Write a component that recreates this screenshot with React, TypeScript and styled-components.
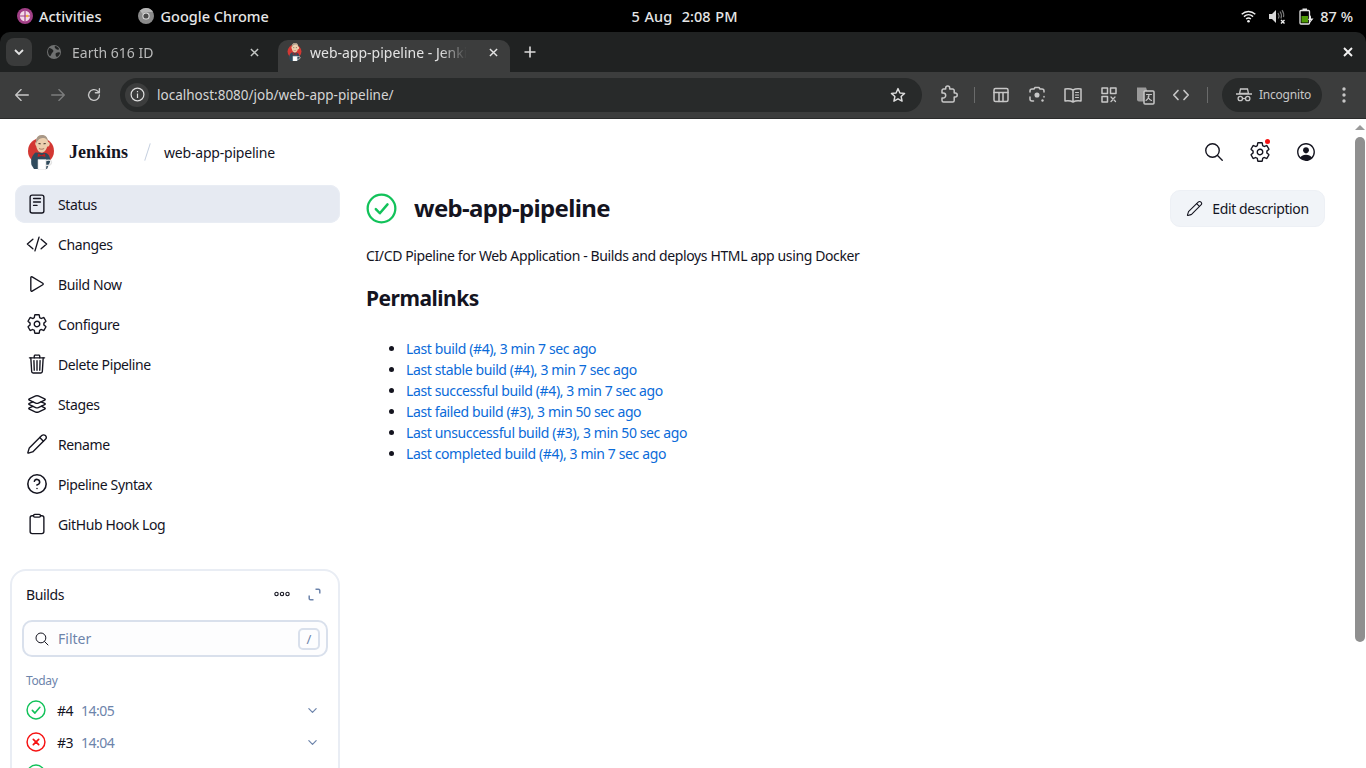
import React from "react";
import styled, { createGlobalStyle } from "styled-components";
import { Pencil, CircleHelp } from "lucide-react";
import {
  IoReaderOutline,
  IoCodeSlashOutline,
  IoPlayOutline,
  IoSettingsOutline,
  IoTrashOutline,
  IoLayersOutline,
  IoClipboardOutline,
  IoSearchOutline,
  IoPersonCircleOutline,
  IoChevronDown,
} from "react-icons/io5";

const GlobalStyle = createGlobalStyle`
  html, body {
    margin: 0;
    padding: 0;
    height: 768px;
    overflow: hidden;
    background: #fff;
    font-family: "Noto Sans", sans-serif;
  }
  * { box-sizing: border-box; }
`;

const Screen = styled.div`
  width: 1366px;
  height: 768px;
  display: flex;
  flex-direction: column;
  overflow: hidden;
  background: #000;
`;

/* gnome top bar */
const TopBar = styled.div`
  height: 32px;
  flex: none;
  display: grid;
  grid-template-columns: 1fr auto 1fr;
  align-items: center;
  padding: 0 13px 0 17px;
  color: #e6e6e6;
  font-size: 14.5px;
  font-weight: 500;
`;

const TopLeft = styled.div`
  display: flex;
  align-items: center;
`;

const TopItem = styled.div<{ $gap?: number }>`
  display: flex;
  align-items: center;
  gap: 6px;
  margin-right: ${(p) => p.$gap ?? 0}px;
`;

const Clock = styled.div`
  word-spacing: 1px;
  white-space: pre;
  margin-right: 1px;
`;

const TopRight = styled.div`
  display: flex;
  align-items: center;
  justify-content: flex-end;
  gap: 13px;
`;

const Battery = styled.div`
  display: flex;
  align-items: center;
  gap: 6px;
`;

/* chrome tabs */
const TabStrip = styled.div`
  height: 40px;
  flex: none;
  background: #202222;
  border-radius: 10px 10px 0 0;
  display: flex;
  align-items: flex-end;
  padding-left: 6px;
  position: relative;
`;

const TabSearch = styled.div`
  width: 26px;
  height: 28px;
  margin-bottom: 6px;
  border-radius: 8px;
  background: #3a3b3b;
  display: flex;
  align-items: center;
  justify-content: center;
`;

const Tab = styled.div<{ $active?: boolean }>`
  width: ${(p) => (p.$active ? 232 : 239)}px;
  height: 32px;
  margin-left: ${(p) => (p.$active ? 0 : 7)}px;
  display: flex;
  align-items: center;
  padding: 0 ${(p) => (p.$active ? 9 : 16)}px 8px ${(p) => (p.$active ? 9 : 7)}px;
  border-radius: 10px 10px 0 0;
  background: ${(p) => (p.$active ? "#3c3d3d" : "transparent")};
  color: ${(p) => (p.$active ? "#e3e3e3" : "#b9baba")};
  font-size: 14px;
  gap: ${(p) => (p.$active ? 8 : 10)}px;
`;

const TabTitle = styled.div`
  flex: 1;
  min-width: 0;
  white-space: nowrap;
  overflow: hidden;
  -webkit-mask-image: linear-gradient(to right, #000 78%, transparent 94%);
`;

const TabClose = styled.div<{ $dim?: boolean }>`
  width: 16px;
  height: 16px;
  flex: none;
  display: flex;
  align-items: center;
  justify-content: center;
  color: ${(p) => (p.$dim ? "#c4c7c5" : "#e3e3e3")};
`;

const NewTab = styled.div`
  width: 40px;
  height: 32px;
  padding-bottom: 8px;
  display: flex;
  align-items: center;
  justify-content: center;
  color: #dcdcdc;
`;

const WindowClose = styled.div`
  position: absolute;
  right: 9px;
  top: 11px;
  width: 18px;
  height: 18px;
  display: flex;
  align-items: center;
  justify-content: center;
  color: #f2f2f2;
`;

const Toolbar = styled.div`
  height: 47px;
  flex: none;
  background: #3c3d3d;
  display: flex;
  align-items: center;
  padding: 0 0 1px 12px;
  border-bottom: 1px solid #2a2b2b;
`;

const NavButton = styled.div<{ $off?: boolean }>`
  width: 20px;
  height: 20px;
  margin-right: 16px;
  display: flex;
  align-items: center;
  justify-content: center;
  color: ${(p) => (p.$off ? "#7c7d7d" : "#c7c7c7")};
`;

const Omnibox = styled.div`
  width: 802px;
  height: 34px;
  border-radius: 17px;
  background: #282a2a;
  display: flex;
  align-items: center;
  padding: 0 16px 0 5px;
  color: #d5d5d5;
  font-size: 13.5px;
`;

const SiteInfo = styled.div`
  width: 24px;
  height: 24px;
  border-radius: 50%;
  background: #3c3d3d;
  margin-right: 8px;
  display: flex;
  align-items: center;
  justify-content: center;
`;

const Url = styled.div`
  flex: 1;
`;

const ToolIcons = styled.div`
  display: flex;
  align-items: center;
  margin-left: 8px;
`;

const ToolIcon = styled.div`
  width: 36px;
  display: flex;
  align-items: center;
  justify-content: center;
  color: #c7c7c7;
`;

const ToolDivider = styled.div`
  width: 1px;
  height: 16px;
  background: #6a6b6b;
  margin: 0 8px 0 8px;
`;

const IncognitoPill = styled.div`
  width: 100px;
  height: 34px;
  margin-left: 6px;
  padding-left: 3px;
  border-radius: 17px;
  background: #282a2a;
  display: flex;
  align-items: center;
  justify-content: center;
  gap: 7px;
  color: #c7c7c7;
  font-size: 12px;
  letter-spacing: -0.2px;
`;

const MenuDots = styled.div`
  margin-left: 10px;
  width: 24px;
  display: flex;
  justify-content: center;
  color: #c7c7c7;
`;

/* jenkins page */
const Viewport = styled.div`
  flex: 1;
  min-height: 0;
  display: flex;
  background: #fff;
`;

const Page = styled.div`
  flex: 1;
  min-width: 0;
  overflow: hidden;
  color: #14141f;
  letter-spacing: -0.38px;
`;

const Scrollbar = styled.div`
  width: 13px;
  flex: none;
  display: flex;
  flex-direction: column;
  align-items: center;
  padding-top: 6px;
`;

const ScrollArrow = styled.div`
  width: 0;
  height: 0;
  border-left: 5px solid transparent;
  border-right: 5px solid transparent;
  border-bottom: 5px solid #9a9a9a;
`;

const ScrollThumb = styled.div`
  width: 10px;
  height: 505px;
  margin-top: 7px;
  border-radius: 5px;
  background: #8f8f8f;
`;

const Header = styled.header`
  height: 66px;
  display: flex;
  align-items: center;
  padding: 0 24px 0 27px;
`;

const Brand = styled.div`
  font-family: "Liberation Serif", serif;
  font-weight: 700;
  font-size: 18px;
  letter-spacing: 0;
  margin-left: 14px;
  color: #14141f;
`;

const Slash = styled.div`
  width: 1px;
  height: 18px;
  margin: 0 16px 0 19px;
  background: #c6d0e0;
  transform: rotate(18deg);
`;

const Crumb = styled.div`
  font-size: 14px;
  letter-spacing: -0.2px;
  flex: 1;
`;

const HeaderIcon = styled.div`
  width: 46px;
  height: 32px;
  display: flex;
  align-items: center;
  justify-content: center;
  position: relative;
  font-size: 22px;
`;

const Dot = styled.span`
  position: absolute;
  top: 3px;
  left: 28px;
  width: 5px;
  height: 5px;
  border-radius: 50%;
  background: #f61313;
`;

const Body = styled.div`
  display: flex;
  align-items: flex-start;
`;

const Side = styled.aside`
  width: 340px;
  flex: none;
  padding-left: 10px;
`;

const Nav = styled.nav`
  display: flex;
  flex-direction: column;
  gap: 2px;
  margin-left: 5px;
`;

const NavItem = styled.a<{ $active?: boolean }>`
  height: 38px;
  display: flex;
  align-items: center;
  gap: 10px;
  padding-left: 11px;
  border-radius: 10px;
  font-size: 14px;
  color: #14141f;
  background: ${(p) => (p.$active ? "#e6eaf2" : "transparent")};
  box-shadow: ${(p) => (p.$active ? "inset 0 0 0 1px #e9edf4" : "none")};
  svg {
    font-size: 22px;
    flex: none;
  }
`;

const BuildsCard = styled.section`
  margin-top: 26px;
  height: 260px;
  border: 2px solid #e9edf4;
  border-radius: 16px;
  padding: 0 10px;
`;

const CardHead = styled.div`
  height: 46px;
  margin-bottom: 3px;
  display: flex;
  align-items: center;
  padding: 0 6px 0 4px;
  font-size: 14px;
`;

const CardTitle = styled.div`
  flex: 1;
`;

const CardAction = styled.div<{ $muted?: boolean }>`
  width: 16px;
  height: 16px;
  margin-left: 16px;
  display: flex;
  align-items: center;
  justify-content: center;
  color: ${(p) => (p.$muted ? "#6d84ab" : "#14141f")};
`;

const Filter = styled.div`
  height: 37px;
  border: 2px solid #d9e0ec;
  border-radius: 10px;
  background: #fdfdfe;
  display: flex;
  align-items: center;
  padding: 0 6px 0 10px;
  font-size: 14px;
  letter-spacing: 0;
  color: #6d84ab;
  gap: 8px;
  svg {
    font-size: 16px;
    color: #14141f;
  }
`;

const FilterLabel = styled.div`
  flex: 1;
`;

const KeyHint = styled.div`
  width: 22px;
  height: 22px;
  border: 2px solid #d9e0ec;
  border-radius: 5px;
  display: flex;
  align-items: center;
  justify-content: center;
  font-size: 13px;
  color: #6d84ab;
`;

const GroupLabel = styled.div`
  margin: 16px 0 0 4px;
  font-size: 12px;
  line-height: 16px;
  color: #6d84ab;
`;

const BuildList = styled.div`
  margin-top: 5px;
`;

const BuildRow = styled.div`
  height: 32px;
  display: flex;
  align-items: center;
  padding: 0 9px 0 4px;
  font-size: 14px;
  letter-spacing: -0.5px;
`;

const BuildNumber = styled.span`
  margin-left: 11px;
`;

const BuildTime = styled.span`
  margin-left: 8px;
  flex: 1;
  color: #6d84ab;
`;

const Expand = styled.div`
  display: flex;
  color: #6d84ab;
  font-size: 13px;
`;

const Main = styled.main`
  flex: 1;
  min-width: 0;
  padding: 4px 28px 0 26px;
`;

const TitleRow = styled.div`
  height: 38px;
  display: flex;
  align-items: center;
`;

const Title = styled.h1`
  margin: 0 0 0 17px;
  padding-bottom: 2px;
  flex: 1;
  font-size: 24px;
  font-weight: 700;
  letter-spacing: -0.65px;
  color: #14141f;
`;

const EditButton = styled.button`
  width: 155px;
  height: 37px;
  border: 1px solid #edf0f5;
  border-radius: 10px;
  background: #f1f4f8;
  display: flex;
  align-items: center;
  justify-content: center;
  gap: 9px;
  font: inherit;
  font-size: 14px;
  letter-spacing: -0.38px;
  color: #14141f;
`;

const Description = styled.p`
  margin: 19px 0 0;
  font-size: 14px;
  line-height: 20px;
`;

const SectionTitle = styled.h2`
  margin: 17px 0 0;
  font-size: 21px;
  line-height: 30px;
  letter-spacing: -0.5px;
  font-weight: 700;
`;

const LinkList = styled.ul`
  margin: 25px 0 0;
  padding-left: 40px;
  font-size: 14px;
  line-height: 21px;
  color: #14141f;
`;

const PermaLink = styled.a`
  color: #0b6bd9;
`;

const NAV = [
  { label: "Status", icon: <IoReaderOutline />, active: true },
  { label: "Changes", icon: <IoCodeSlashOutline /> },
  { label: "Build Now", icon: <IoPlayOutline /> },
  { label: "Configure", icon: <IoSettingsOutline /> },
  { label: "Delete Pipeline", icon: <IoTrashOutline /> },
  { label: "Stages", icon: <IoLayersOutline /> },
  { label: "Rename", icon: <Pencil size={22} strokeWidth={1.5} /> },
  { label: "Pipeline Syntax", icon: <CircleHelp size={22} strokeWidth={1.7} /> },
  { label: "GitHub Hook Log", icon: <IoClipboardOutline /> },
];

const LINKS = [
  "Last build (#4), 3 min 7 sec ago",
  "Last stable build (#4), 3 min 7 sec ago",
  "Last successful build (#4), 3 min 7 sec ago",
  "Last failed build (#3), 3 min 50 sec ago",
  "Last unsuccessful build (#3), 3 min 50 sec ago",
  "Last completed build (#4), 3 min 7 sec ago",
];

const BUILDS = [
  { id: "#4", time: "14:05", ok: true },
  { id: "#3", time: "14:04", ok: false },
  { id: "", time: "", ok: true },
];

function StatusIcon({ ok, size }: { ok: boolean; size: number }) {
  const color = ok ? "#12c25a" : "#f61313";
  return (
    <svg width={size} height={size} viewBox="0 0 30 30" fill="none" stroke={color} strokeLinecap="round" strokeLinejoin="round">
      <circle cx="15" cy="15" r="13.4" strokeWidth="2.2" />
      {ok ? (
        <path d="M9.500 15.600l3.900 4L20.800 11" strokeWidth="2.400" />
      ) : (
        <path d="M11 11l8 8M19 11l-8 8" strokeWidth="2.600" />
      )}
    </svg>
  );
}

function JenkinsLogo({ size }: { size: number }) {
  return (
    <svg width={size} height={size * 1.25} viewBox="0 0 28 35">
      <circle cx="14" cy="16" r="13" fill="#d33833" />
      <path d="M4.500 30c-1-5 0-9 4-12.500L19 18c4 2 4.500 6 4 9l-3 7H7z" fill="#2f4a5c" />
      <path d="M9 7c0-4.500 2.500-7 6-7s6 3 6 7c1.300 0 2 1.200 1.600 2.800s-1.600 2-2.400 1.800c-.8 3.500-3 6.400-6 6s-4.400-3.600-5-6.600C8 10 8 7 9 7z" fill="#eccfae" />
      <path d="M9 8.500C8.500 3 11 0 15 0c3.300 0 5.500 2 6 6-2-2.500-3-3-5.500-3-3 0-4.700 2.200-6.500 5.500z" fill="#a89888" />
      <path d="M11.500 8.600l2.200.2M16.500 8.800l2.200-.2" stroke="#3d2f26" strokeWidth="1" />
      <path d="M12 13.500c1.400.9 3.800.9 5.200 0" stroke="#94604a" strokeWidth=".8" fill="none" />
      <path d="M11 18.500l3.500 1.800 3.500-1.800.5 3.600-4-1-4 1z" fill="#c01f1f" />
      <path d="M11 24.500h8v9a1.500 1.500 0 0 1-1.500 1.500h-5a1.500 1.500 0 0 1-1.500-1.500z" fill="#fff" stroke="#cfcfcf" strokeWidth=".6" />
      <path d="M19 25.500c4-1 5.500 0 5.500 2s-2.500 3-5.500 3" fill="none" stroke="#e4e4e4" strokeWidth="1.400" />
    </svg>
  );
}

function GnomeLogo() {
  return (
    <svg width="16" height="16" viewBox="0 0 16 16">
      <circle cx="8" cy="8" r="8" fill="#a13f86" />
      <circle cx="8" cy="8" r="5.200" fill="#f4dbe9" />
      <path d="M8 2.800v10.400M2.800 8h10.400" stroke="#a13f86" strokeWidth="1.200" />
      <circle cx="10.200" cy="8" r="1.300" fill="#f2b134" />
    </svg>
  );
}

function ChromeLogo() {
  return (
    <svg width="16" height="16" viewBox="0 0 16 16">
      <circle cx="8" cy="8" r="8" fill="#8a8a8a" />
      <path d="M8 0a8 8 0 0 1 7 4H8a4 4 0 0 0-3.500 2L2 2.600A8 8 0 0 1 8 0z" fill="#b5b5b5" />
      <circle cx="8" cy="8" r="3.600" fill="#e6e6e6" />
      <circle cx="8" cy="8" r="2.600" fill="#4a4a4a" />
    </svg>
  );
}

function Wifi() {
  return (
    <svg width="15" height="13" viewBox="0 0 15 13" fill="none" stroke="#f0f0f0" strokeWidth="1.400">
      <path d="M.7 4.200c4-3.600 9.600-3.600 13.600 0" />
      <path d="M2.900 6.600c2.800-2.400 6.400-2.400 9.200 0" />
      <path d="M5.100 9c1.500-1.200 3.300-1.200 4.800 0" />
      <circle cx="7.500" cy="11.300" r="1.300" fill="#f0f0f0" stroke="none" />
    </svg>
  );
}

function MutedSpeaker() {
  return (
    <svg width="17" height="15" viewBox="0 0 17 15" fill="none">
      <path d="M0 5h3l4-4v13l-4-4H0z" fill="#d8d8d8" />
      <path d="M9 4c1.200 1.800 1.200 4 .4 5.600M11 2.500c1.500 2 1.800 4.600 1 7M13 1.200c1.500 2 2 4.500 1.500 7" stroke="#777" strokeWidth="1.200" />
      <path d="M12 11l3.500 3.500M15.500 11L12 14.500" stroke="#f0f0f0" strokeWidth="1.400" />
    </svg>
  );
}

function BatteryIcon() {
  return (
    <svg width="15" height="17" viewBox="0 0 15 17" fill="none">
      <rect x="1" y="2.500" width="9.500" height="13.500" rx="1" stroke="#e6e6e6" strokeWidth="1.300" />
      <rect x="3.500" y="0.500" width="4.500" height="2" fill="#e6e6e6" />
      <rect x="2.500" y="8" width="6.500" height="6.500" fill="#4e9a06" />
      <path d="M12 7l-3 5h2.500L10 16l4.500-5.500H12z" fill="#f0f0f0" />
    </svg>
  );
}

function Glyph({ children, w = 20, h = 20 }: { children: React.ReactNode; w?: number; h?: number }) {
  return (
    <svg width={w} height={h} viewBox="0 0 20 20" fill="none" stroke="currentColor" strokeWidth="1.500" strokeLinecap="round" strokeLinejoin="round">
      {children}
    </svg>
  );
}

function CloseX({ size = 10, weight = 1.6 }: { size?: number; weight?: number }) {
  return (
    <svg width={size} height={size} viewBox="0 0 10 10" stroke="currentColor" strokeWidth={weight} fill="none">
      <path d="M1 1l8 8M9 1l-8 8" />
    </svg>
  );
}

const TOOL_ICONS = [
  <Glyph key="layout">
    <rect x="3" y="3.500" width="14" height="13" rx="1.500" />
    <path d="M3 7.500h14M8 7.500v9M12 7.500v9" />
  </Glyph>,
  <Glyph key="lens">
    <path d="M3 7V6a2 2 0 0 1 2-2h2l1-1.500h4L13 4h2a2 2 0 0 1 2 2v1M3 12v2a2 2 0 0 0 2 2h1.500M17 11.500V12" />
    <circle cx="10" cy="10" r="1.800" fill="currentColor" />
    <circle cx="15.500" cy="15.500" r="1.200" fill="currentColor" stroke="none" />
  </Glyph>,
  <Glyph key="reader">
    <path d="M10 5c-2-1.200-5-1.500-8-1v12c3-.5 6-.2 8 1 2-1.200 5-1.500 8-1V4c-3-.5-6-.2-8 1zM10 5v12" />
    <path d="M12.500 7.500h3M12.500 10h3M12.500 12.500h3" strokeWidth="1.200" />
  </Glyph>,
  <Glyph key="qr">
    <rect x="3" y="3" width="5.500" height="5.500" />
    <rect x="11.500" y="3" width="5.500" height="5.500" />
    <rect x="3" y="11.500" width="5.500" height="5.500" />
    <path d="M12 12l1.500 1.500M16 12l-1.500 1.500M12 16.500l1.500-1.500M16.500 16.500L15 15" strokeWidth="1.300" />
  </Glyph>,
  <Glyph key="translate">
    <path d="M2 2.500h9l5 14H4a2 2 0 0 1-2-2z" fill="#9a9a9a" stroke="none" />
    <rect x="9" y="6" width="10" height="13" rx="1" fill="#3c3d3d" />
    <path d="M11.500 9.500h5M14 9.500c0 3-1.500 5-3 6M13 12c.800 1.500 2 3 3.500 3.500" strokeWidth="1.100" />
  </Glyph>,
  <Glyph key="code">
    <path d="M7 5.500L2.800 10 7 14.500M13 5.500l4.200 4.500-4.200 4.500" strokeWidth="1.700" />
  </Glyph>,
];

export default function App() {
  return (
    <Screen>
      <GlobalStyle />
      <TopBar>
        <TopLeft>
          <TopItem $gap={37}>
            <GnomeLogo />
            <span>Activities</span>
          </TopItem>
          <TopItem>
            <ChromeLogo />
            <span>Google Chrome</span>
          </TopItem>
        </TopLeft>
        <Clock>5 Aug  2:08 PM</Clock>
        <TopRight>
          <Wifi />
          <MutedSpeaker />
          <Battery>
            <BatteryIcon />
            <span>87 %</span>
          </Battery>
        </TopRight>
      </TopBar>

      <TabStrip>
        <TabSearch>
          <svg width="10" height="7" viewBox="0 0 10 7" fill="none" stroke="#e3e3e3" strokeWidth="1.800">
            <path d="M1 1l4 4 4-4" />
          </svg>
        </TabSearch>
        <Tab>
          <svg width="16" height="16" viewBox="0 0 16 16">
            <circle cx="8" cy="8" r="7" fill="#6f7171" />
            <path d="M3 4c2 0 3 1 4 2s0 2-1 3-1 3-2 3-2-3-2-5zM9 2c2 0 4 2 4 3s-2 1-3 0-2-2-1-3zM10 9c2-1 4-1 4 0s-2 4-3 4-2-3-1-4z" fill="#202222" />
          </svg>
          <TabTitle>Earth 616 ID</TabTitle>
          <TabClose $dim>
            <CloseX size={9} />
          </TabClose>
        </Tab>
        <Tab $active>
          <JenkinsLogo size={15} />
          <TabTitle>web-app-pipeline - Jenkins</TabTitle>
          <TabClose>
            <CloseX size={9} />
          </TabClose>
        </Tab>
        <NewTab>
          <svg width="12" height="12" viewBox="0 0 12 12" stroke="currentColor" strokeWidth="1.600">
            <path d="M6 .5v11M.5 6h11" />
          </svg>
        </NewTab>
        <WindowClose>
          <CloseX size={10} weight={1.900} />
        </WindowClose>
      </TabStrip>

      <Toolbar>
        <NavButton>
          <Glyph w={18} h={18}>
            <path d="M17 10H3.500M9 4l-6 6 6 6" />
          </Glyph>
        </NavButton>
        <NavButton $off>
          <Glyph w={18} h={18}>
            <path d="M3 10h13.500M11 4l6 6-6 6" />
          </Glyph>
        </NavButton>
        <NavButton>
          <Glyph w={18} h={18}>
            <path d="M16 10a6 6 0 1 1-1.800-4.300L16 7.500M16 3v4.500h-4.500" />
          </Glyph>
        </NavButton>
        <Omnibox>
          <SiteInfo>
            <svg width="15" height="15" viewBox="0 0 15 15" fill="none" stroke="#dedede" strokeWidth="1.200">
              <circle cx="7.500" cy="7.500" r="6.400" />
              <path d="M7.500 6.500v4.500M7.500 4v1.300" />
            </svg>
          </SiteInfo>
          <Url>localhost:8080/job/web-app-pipeline/</Url>
          <svg width="16" height="16" viewBox="0 0 20 20" fill="none" stroke="#dedede" strokeWidth="1.800" strokeLinejoin="round">
            <path d="M10 2l2.400 5.400 5.800.6-4.300 3.900 1.200 5.800L10 14.800l-5.100 2.900 1.200-5.800L1.800 8l5.800-.6z" />
          </svg>
        </Omnibox>
        <ToolIcons>
          <ToolIcon>
            <Glyph>
              <path d="M4 5.500a1.500 1.500 0 0 1 1.500-1.500h2.200V3a2 2 0 0 1 4 0v1h3a1.500 1.500 0 0 1 1.500 1.500V8h1a2 2 0 0 1 0 4h-1v3.500a1.500 1.500 0 0 1-1.500 1.500H5.500A1.500 1.500 0 0 1 4 15.500v-2.500h1.200a2.500 2.500 0 0 0 0-5H4z" />
            </Glyph>
          </ToolIcon>
          <ToolDivider />
          {TOOL_ICONS.map((icon) => (
            <ToolIcon key={icon.key}>{icon}</ToolIcon>
          ))}
          <ToolDivider />
        </ToolIcons>
        <IncognitoPill>
          <svg width="16" height="14" viewBox="0 0 16 14" fill="none" stroke="currentColor" strokeWidth="1.300">
            <path d="M4.500 1h7l1 4.500h-9zM0 6h16" />
            <circle cx="4.300" cy="10.500" r="2.200" />
            <circle cx="11.700" cy="10.500" r="2.200" />
            <path d="M6.500 10.500h3" />
          </svg>
          <span>Incognito</span>
        </IncognitoPill>
        <MenuDots>
          <svg width="4" height="16" viewBox="0 0 4 16" fill="currentColor">
            <circle cx="2" cy="2" r="1.700" />
            <circle cx="2" cy="8" r="1.700" />
            <circle cx="2" cy="14" r="1.700" />
          </svg>
        </MenuDots>
      </Toolbar>

      <Viewport>
        <Page>
          <Header>
            <JenkinsLogo size={28} />
            <Brand>Jenkins</Brand>
            <Slash />
            <Crumb>web-app-pipeline</Crumb>
            <HeaderIcon>
              <IoSearchOutline />
            </HeaderIcon>
            <HeaderIcon>
              <IoSettingsOutline />
              <Dot />
            </HeaderIcon>
            <HeaderIcon>
              <IoPersonCircleOutline />
            </HeaderIcon>
          </Header>
          <Body>
            <Side>
              <Nav>
                {NAV.map((item) => (
                  <NavItem key={item.label} $active={item.active}>
                    {item.icon}
                    <span>{item.label}</span>
                  </NavItem>
                ))}
              </Nav>
              <BuildsCard>
                <CardHead>
                  <CardTitle>Builds</CardTitle>
                  <CardAction>
                    <svg width="16" height="6" viewBox="0 0 16 6" fill="none" stroke="currentColor" strokeWidth="1.100">
                      <circle cx="2.500" cy="3" r="1.700" />
                      <circle cx="8" cy="3" r="1.700" />
                      <circle cx="13.500" cy="3" r="1.700" />
                    </svg>
                  </CardAction>
                  <CardAction $muted>
                    <svg width="13" height="13" viewBox="0 0 13 13" fill="none" stroke="currentColor" strokeWidth="1.500">
                      <path d="M7.500 1.200h3a1.300 1.300 0 0 1 1.300 1.300v3M1.200 7.500v3a1.300 1.300 0 0 0 1.300 1.300h3" />
                    </svg>
                  </CardAction>
                </CardHead>
                <Filter>
                  <IoSearchOutline />
                  <FilterLabel>Filter</FilterLabel>
                  <KeyHint>/</KeyHint>
                </Filter>
                <GroupLabel>Today</GroupLabel>
                <BuildList>
                  {BUILDS.map((b, i) => (
                    <BuildRow key={i}>
                      <StatusIcon ok={b.ok} size={20} />
                      <BuildNumber>{b.id}</BuildNumber>
                      <BuildTime>{b.time}</BuildTime>
                      <Expand>
                        <IoChevronDown />
                      </Expand>
                    </BuildRow>
                  ))}
                </BuildList>
              </BuildsCard>
            </Side>
            <Main>
              <TitleRow>
                <StatusIcon ok size={31} />
                <Title>web-app-pipeline</Title>
                <EditButton>
                  <Pencil size={17} strokeWidth={1.5} />
                  Edit description
                </EditButton>
              </TitleRow>
              <Description>
                CI/CD Pipeline for Web Application - Builds and deploys HTML app using Docker
              </Description>
              <SectionTitle>Permalinks</SectionTitle>
              <LinkList>
                {LINKS.map((l) => (
                  <li key={l}>
                    <PermaLink>{l}</PermaLink>
                  </li>
                ))}
              </LinkList>
            </Main>
          </Body>
        </Page>
        <Scrollbar>
          <ScrollArrow />
          <ScrollThumb />
        </Scrollbar>
      </Viewport>
    </Screen>
  );
}
